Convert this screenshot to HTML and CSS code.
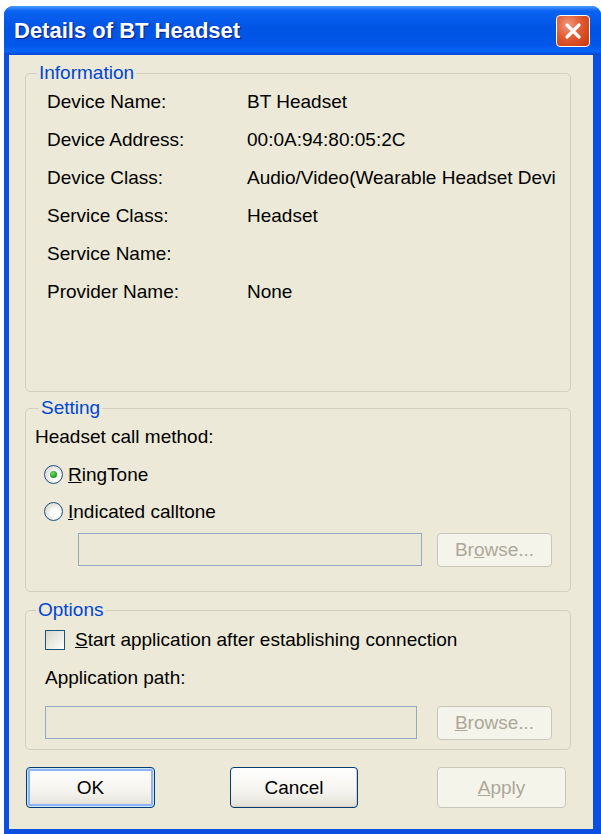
FILE: index.html
```html
<!DOCTYPE html>
<html lang="en">
<head>
    <meta charset="UTF-8">
    <title>Details of BT Headset</title>
    <link rel="stylesheet" href="styles.css">
</head>
<body>
    <div class="window">
        <div class="titlebar">
            <span class="title">Details of BT Headset</span>
            <span class="close-btn">
                <svg width="20" height="20" viewBox="0 0 20 20">
                    <path d="M4 4 L16 16 M16 4 L4 16" stroke="#fff" stroke-width="3.2" stroke-linecap="round"/>
                </svg>
            </span>
        </div>

        <div class="client">
            <!-- Information group -->
            <fieldset class="group group-info">
                <legend>Information</legend>
                <div class="group-body info-grid">
                    <span>Device Name:</span><span class="value">BT Headset</span>
                    <span>Device Address:</span><span class="value">00:0A:94:80:05:2C</span>
                    <span>Device Class:</span><span class="value">Audio/Video(Wearable Headset Devi</span>
                    <span>Service Class:</span><span class="value">Headset</span>
                    <span>Service Name:</span><span class="value"></span>
                    <span>Provider Name:</span><span class="value">None</span>
                </div>
            </fieldset>

            <!-- Setting group -->
            <fieldset class="group group-setting">
                <legend>Setting</legend>
                <div class="group-body">
                    <div class="method">Headset call method:</div>
                    <div class="radio-row first">
                        <span class="radio checked"></span>
                        <span><u>R</u>ingTone</span>
                    </div>
                    <div class="radio-row">
                        <span class="radio"></span>
                        <span><u>I</u>ndicated calltone</span>
                    </div>
                    <div class="path-row tone-path">
                        <div class="textbox tone-box"></div>
                        <div class="btn disabled browse">Br<u>o</u>wse...</div>
                    </div>
                </div>
            </fieldset>

            <!-- Options group -->
            <fieldset class="group group-options">
                <legend>Options</legend>
                <div class="group-body">
                    <div class="check-row">
                        <span class="checkbox"></span>
                        <span><u>S</u>tart application after establishing connection</span>
                    </div>
                    <div class="app-label">Application path:</div>
                    <div class="path-row">
                        <div class="textbox app-box"></div>
                        <div class="btn disabled browse"><u>B</u>rowse...</div>
                    </div>
                </div>
            </fieldset>

            <div class="buttons">
                <div class="btn default">OK</div>
                <div class="btn cancel">Cancel</div>
                <div class="btn disabled apply"><u>A</u>pply</div>
            </div>
        </div>
    </div>
</body>
</html>
```

FILE: styles.css
```css
body {
    margin: 0;
    background: #fff;
    font-family: "Liberation Sans", Arial, sans-serif;
    font-size: 19px;
    color: #000;
}
.window {
    margin: 6px 0 0 4px;
    width: 597px;
    height: 828px;
    display: flex;
    flex-direction: column;
    background: #0a4ee2;
    border-radius: 9px 9px 0 0;
    overflow: hidden;
}
.titlebar {
    height: 49px;
    flex: none;
    display: flex;
    align-items: center;
    justify-content: space-between;
    padding: 0 11px 0 10px;
    background: linear-gradient(to bottom, #4a9cff 0%, #0b63f2 10%, #0054e4 45%, #0257e8 80%, #0864f8 92%, #0046d6 100%);
}
.title {
    color: #fff;
    font-weight: bold;
    font-size: 22px;
    text-shadow: 1px 1px 1px #0a1d8a;
    margin-top: 1px;
}
.close-btn {
    width: 32px;
    height: 30px;
    margin-top: 1px;
    border: 1px solid #fff;
    border-radius: 4px;
    background: radial-gradient(circle at 35% 30%, #f09a7e 0%, #e05a32 45%, #c8340c 100%);
    display: flex;
    align-items: center;
    justify-content: center;
}
.client {
    flex: 1;
    margin: 0 8px 5px 5px;
    background: #ece9d8;
    padding: 0 22px 0 16px;
    display: flex;
    flex-direction: column;
}

/* group boxes */
.group {
    margin: 0;
    padding: 0;
    border: 1px solid #d0d0bf;
    border-radius: 5px;
    box-sizing: border-box;
    min-inline-size: 0;
}
.group legend {
    margin-left: 11px;
    padding: 0 2px;
    line-height: 20px;
    color: #0046d5;
}
.group-info {
    margin-top: 8px;
    height: 329px;
}
.group-info .group-body {
    padding-left: 21px;
}
.group-setting {
    margin-top: 6px;
    height: 194px;
}
.group-setting legend {
    margin-left: 13px;
}
.group-setting .group-body {
    padding-left: 9px;
}
.group-options {
    margin-top: 8px;
    height: 150px;
}
.group-options legend {
    margin-left: 10px;
}
.group-options .group-body {
    padding-left: 19px;
}

.info-grid {
    display: grid;
    grid-template-columns: 200px 1fr;
    grid-auto-rows: 38px;
    align-items: center;
}
.info-grid .value {
    white-space: nowrap;
}

.method {
    margin-top: 8px;
    line-height: 22px;
}
.radio-row {
    height: 37px;
    display: flex;
    align-items: center;
    padding-left: 9px;
    gap: 5px;
}
.radio-row.first {
    margin-top: 8px;
}
.radio {
    width: 17px;
    height: 17px;
    border: 1px solid #1c5180;
    border-radius: 50%;
    background: radial-gradient(circle at 60% 60%, #fff 25%, #e6e5de 60%, #cfcec6 100%);
    display: flex;
    align-items: center;
    justify-content: center;
}
.radio.checked::after {
    content: "";
    width: 7px;
    height: 7px;
    border-radius: 50%;
    background: radial-gradient(circle at 40% 35%, #6fe06f 0%, #21a121 60%, #148214 100%);
}

.path-row {
    display: flex;
    align-items: flex-start;
    gap: 20px;
}
.tone-path {
    margin-top: 3px;
    padding-left: 43px;
    gap: 15px;
}
.textbox {
    height: 33px;
    box-sizing: border-box;
    border: 1px solid #94a9be;
    background: #ebe8d8;
}
.tone-box {
    width: 344px;
}
.app-box {
    width: 372px;
}

.check-row {
    margin-top: 9px;
    line-height: 22px;
    display: flex;
    align-items: center;
    gap: 10px;
}
.checkbox {
    width: 18px;
    height: 18px;
    border: 1px solid #1c5180;
    background: linear-gradient(135deg, #d6d5cc 0%, #f2f2ee 70%, #fff 100%);
}
.app-label {
    margin-top: 16px;
    line-height: 22px;
    margin-bottom: 17px;
}

/* buttons */
.btn {
    box-sizing: border-box;
    display: flex;
    align-items: center;
    justify-content: center;
    border: 1px solid #003c74;
    border-radius: 4px;
    background: linear-gradient(to bottom, #fff 0%, #f4f3ee 60%, #e3e1d6 100%);
    box-shadow: inset -1px -1px 0 #d6d0c5;
}
.btn.disabled {
    border-color: #c9c7ba;
    background: #f5f4ea;
    box-shadow: none;
    color: #aca899;
}
.browse {
    width: 115px;
    height: 34px;
}
.buttons {
    margin-top: 17px;
    display: flex;
    padding-left: 1px;
}
.buttons .btn {
    height: 41px;
    width: 129px;
}
.btn.default {
    box-shadow: inset 0 0 0 1px #cee7ff, inset 0 0 0 3px #8fb4f5;
}
.btn.cancel {
    margin-left: 75px;
    width: 128px;
}
.btn.apply {
    margin-left: 79px;
}
```
